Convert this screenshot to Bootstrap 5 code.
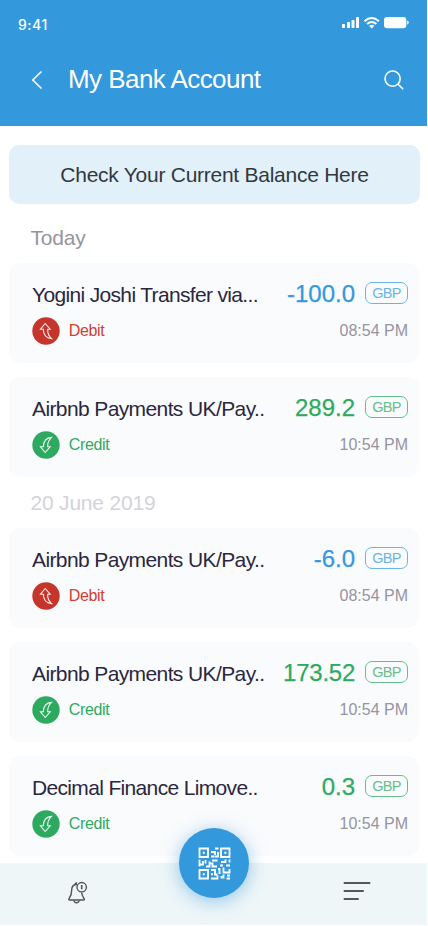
<!DOCTYPE html>
<html lang="en">
<head>
<meta charset="utf-8">
<meta name="viewport" content="width=device-width, initial-scale=1">
<title>My Bank Account</title>
<link rel="stylesheet" href="https://cdn.jsdelivr.net/npm/bootstrap@5.3.0/dist/css/bootstrap.min.css">
<style>
body{font-family:"Liberation Sans",Arial,sans-serif;background:#fff}
.screen{width:427px;height:925px}
.top-bar{height:126px;background:#3498dc;padding:14px 18px 0 18px}
.clock{font:500 14px/22px Inter,sans-serif;letter-spacing:.5px}
.title-row{height:40px;margin-top:24px;padding:0 5px 0 12px}
.page-title{font-size:26px;line-height:32px;letter-spacing:-.56px;margin-left:24px;padding-bottom:2px}
.balance{height:59px;border-radius:10px;background:#e2f0fa;color:#33383d;font-size:21px;letter-spacing:-.26px;margin:19px 7px 0 9px}
.day{font-size:21px;line-height:24px;color:#96949f;letter-spacing:-.2px;padding-left:30.5px}
.day-first{margin-top:22px;margin-bottom:13px}
.day-next{color:#d2d3d8;margin:14px 0 13px}
.entries{gap:14px;padding:0 8px 0 9px}
.entry{height:100px;border-radius:11px;background:#fafbfd;padding:17px 11px 0 23px}
.entry-title{font-size:21px;line-height:30px;letter-spacing:-.61px;color:#2a273f}
.entry-title-tight{letter-spacing:-.66px}
.amount{font-size:24px;line-height:28px;-webkit-text-stroke:.25px currentColor;margin-right:10px;margin-bottom:2px}
.amount-tight{letter-spacing:-.25px}
.currency{width:43px;height:22px;border:1px solid;border-radius:7px;font-size:14.5px;letter-spacing:-.65px;padding-top:2px;margin-bottom:4px}
.entry-foot{height:28px;margin-top:7px}
.entry-foot svg{margin-left:.3px}
.kind{font-size:16px;line-height:22px;letter-spacing:-.32px;margin-left:8.4px}
.time{font-size:16px;line-height:22px;color:#96949f}
.blue{color:#3498dc}.green{color:#2eaa60}.red{color:#cf4035}
.currency.blue{color:#6ab5e8}.currency.green{color:#66bf8a}
.bottom-bar{height:62px;left:0;right:0;bottom:0;background:#eef6f8}
.scan{width:70px;height:70px;left:179px;top:-35px;background:#3498dc;box-shadow:0 3px 18px rgba(52,152,220,.5)}
.bell{margin-left:66px;margin-top:18px}
.menu-icon{margin-right:56px;margin-top:18px}
</style>
<script src="https://cdn.jsdelivr.net/npm/bootstrap@5.3.0/dist/js/bootstrap.bundle.min.js"></script>
</head>
<body>
<svg class="d-none">
  <symbol id="debit" viewBox="0 0 28 28"><circle cx="14" cy="14" r="13.7" fill="#c6352c"/><path d="M8.500 12.200 13.200 6.500l5 5.700h-2.500c-.2 4 .6 6.500 3.800 9.400-5.200-.4-8-4-8.200-9.400z" fill="none" stroke="#fff" stroke-opacity=".9" stroke-width="1.100"/></symbol>
  <symbol id="credit" viewBox="0 0 28 28"><circle cx="14" cy="14" r="13.7" fill="#2eaa60"/><path d="M8.500 15.800 13.200 21.500l5-5.700h-2.500c-.2-4 .6-6.500 3.800-9.400-5.200.4-8 4-8.200 9.400z" fill="none" stroke="#fff" stroke-opacity=".9" stroke-width="1.100"/></symbol>
</svg>
<div class="screen position-relative overflow-hidden">
  <header class="top-bar text-white">
    <div class="d-flex justify-content-between align-items-start">
      <span class="clock">9:41</span>
      <svg width="68" height="16" viewBox="0 0 68 16" fill="#fff">
        <rect x="1" y="10" width="3" height="4" rx=".8"/><rect x="6" y="8" width="3" height="6" rx=".8"/><rect x="10.500" y="6" width="3" height="8" rx=".8"/><rect x="15" y="3" width="3" height="11" rx=".8"/>
        <g fill="none" stroke="#fff" stroke-width="2"><path d="M23.500 7.200q7.200-6.400 14.400 0"/><path d="M26 10q4.700-4.100 9.400 0"/></g><path d="M28 11.700q2.700-2 5.400 0l-2.700 2.700z"/>
        <rect x="43" y="3" width="22.300" height="11.200" rx="3"/><path d="M66.200 6.500q1.500.6 1.500 2.100t-1.500 2.100z"/>
      </svg>
    </div>
    <div class="title-row d-flex align-items-center">
      <svg width="14" height="20" viewBox="0 0 14 20" fill="none" stroke="#fff" stroke-width="1.600"><path d="M11.500 1.500 2.800 10l8.700 8.500"/></svg>
      <h1 class="page-title fw-normal mb-0">My Bank Account</h1>
      <svg class="ms-auto" width="20" height="20" viewBox="0 0 20 20" fill="none" stroke="#fff" stroke-width="1.600"><circle cx="8.600" cy="8.600" r="7.600"/><path d="m14.100 14.200 5 4.900"/></svg>
    </div>
  </header>
  <div class="balance d-flex align-items-center justify-content-center">Check Your Current Balance Here</div>
  <div class="day day-first">Today</div>
  <div class="entries d-flex flex-column">
    <div class="entry">
      <div class="d-flex align-items-center"><span class="entry-title entry-title-tight">Yogini Joshi Transfer via...</span><span class="amount blue ms-auto">-100.0</span><span class="currency blue d-flex align-items-center justify-content-center">GBP</span></div>
      <div class="entry-foot d-flex align-items-center"><svg width="28" height="28"><use href="#debit"/></svg><span class="kind red">Debit</span><span class="time ms-auto">08:54 PM</span></div>
    </div>
    <div class="entry">
      <div class="d-flex align-items-center"><span class="entry-title">Airbnb Payments UK/Pay..</span><span class="amount green ms-auto">289.2</span><span class="currency green d-flex align-items-center justify-content-center">GBP</span></div>
      <div class="entry-foot d-flex align-items-center"><svg width="28" height="28"><use href="#credit"/></svg><span class="kind green">Credit</span><span class="time ms-auto">10:54 PM</span></div>
    </div>
  </div>
  <div class="day day-next">20 June 2019</div>
  <div class="entries d-flex flex-column">
    <div class="entry">
      <div class="d-flex align-items-center"><span class="entry-title">Airbnb Payments UK/Pay..</span><span class="amount blue ms-auto">-6.0</span><span class="currency blue d-flex align-items-center justify-content-center">GBP</span></div>
      <div class="entry-foot d-flex align-items-center"><svg width="28" height="28"><use href="#debit"/></svg><span class="kind red">Debit</span><span class="time ms-auto">08:54 PM</span></div>
    </div>
    <div class="entry">
      <div class="d-flex align-items-center"><span class="entry-title">Airbnb Payments UK/Pay..</span><span class="amount amount-tight green ms-auto">173.52</span><span class="currency green d-flex align-items-center justify-content-center">GBP</span></div>
      <div class="entry-foot d-flex align-items-center"><svg width="28" height="28"><use href="#credit"/></svg><span class="kind green">Credit</span><span class="time ms-auto">10:54 PM</span></div>
    </div>
    <div class="entry">
      <div class="d-flex align-items-center"><span class="entry-title entry-title-tight">Decimal Finance Limove..</span><span class="amount green ms-auto">0.3</span><span class="currency green d-flex align-items-center justify-content-center">GBP</span></div>
      <div class="entry-foot d-flex align-items-center"><svg width="28" height="28"><use href="#credit"/></svg><span class="kind green">Credit</span><span class="time ms-auto">10:54 PM</span></div>
    </div>
  </div>
  <nav class="bottom-bar position-absolute d-flex justify-content-between align-items-start">
    <svg class="bell" width="22" height="24" viewBox="0 0 22 24" fill="none" stroke="#505356" stroke-width="1.400"><path d="M11 3.200C7.200 3.500 5.700 6 5.700 9c0 5-1.200 6.500-2.700 8.700-.5.800-.2 1.300.7 1.300h13.700c.9 0 1.200-.5.700-1.300-1.200-2-2.100-3.200-2.500-6"/><path d="M8 19.500c.2 2.900 4.900 2.900 5.100 0M9 3.200q.5-1.500 2-1.200"/><circle cx="15.700" cy="6.200" r="4.700"/><path d="M15.700 4v4.300" stroke-width="1.600"/></svg>
    <button class="scan btn rounded-circle border-0 p-0 position-absolute d-flex align-items-center justify-content-center" aria-label="Scan QR">
      <svg width="33" height="33" viewBox="0 0 33 33" fill="none" stroke="#fff" stroke-width="1.800">
        <path d="M1.500 1.500h8.500v8.500h-8.500zM23 1.500h8.500v8.500h-8.500zM1.500 23h8.500v8.500h-8.500z"/>
        <path d="M4.800 5.750h2M26.300 5.750h2M4.800 27.250h2"/>
        <path d="M17 1.500h3.500M13 5h4v3M20 5v4.500h-3M13 9.500h3.500M1.500 12.500v7M1.500 17.500h3.500v-3.500M7.500 13v3.500M8 19.500h3.500v-5M11.500 16.500h3v3h4.500M14 13.500h5.500M23 15h4.500v-2.500M31.500 12.500v3M28 18.500h4M22 18.500h3M13 23h4v4.500h2.500M13 27.250h2M13 31.500h6.500v-3M20 22h1.500v5M23.500 31.500v-2.500M25.500 20.500v5h6v-3.500M25.500 27.500v4M29 28.500h3M28.500 31.500h3.500"/>
      </svg>
    </button>
    <svg class="menu-icon" width="28" height="20" viewBox="0 0 28 20" stroke="#55585b" stroke-width="2" stroke-linecap="round"><path d="M1.500 2h25M1.500 10h18.500M1.500 18h13.500"/></svg>
  </nav>
</div>
</body>
</html>
